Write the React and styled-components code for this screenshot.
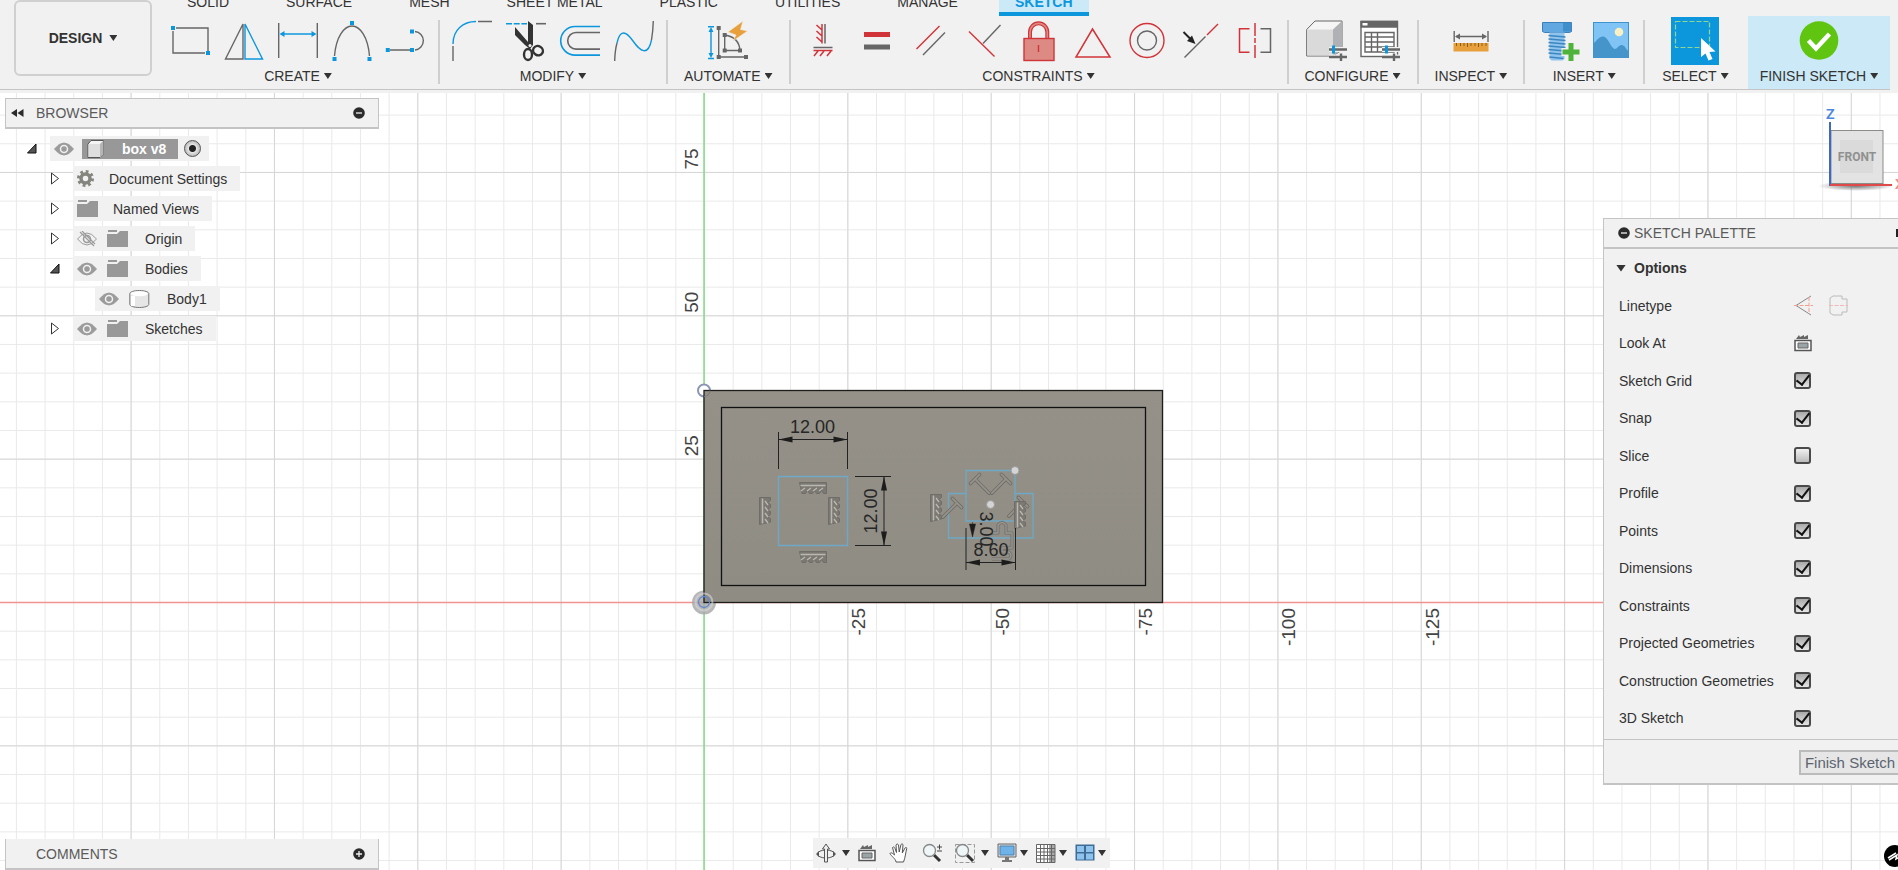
import React from 'react'
import { Fragment } from 'react';
import styled, { createGlobalStyle } from 'styled-components';

const GREY = '#666';
const BLUE = '#0c97dd';
const RED = '#d13438';

/* ---------- ribbon icons, all on a 40 x 48 board ---------- */

const Dot = ({ x, y, c = BLUE, s = 4 }) => (
    <rect x={x - s / 2} y={y - s / 2} width={s} height={s} fill={c} stroke="none" />
);

const Sliders = ({ x }) => (
    <g transform={`translate(${x} 0)`}>
        <path d="M0 32.5h18M0 40h18" stroke="#f1f1f1" strokeWidth="5" />
        <path d="M0 32.5h18M0 40h18M12 36.5v7.5" stroke={GREY} strokeWidth="2.4" />
        <path d="M4.5 28.5v8" stroke={BLUE} strokeWidth="3" />
    </g>
);

const icons = {
    rectangle: (
        <g fill="none" stroke={GREY} strokeWidth="1.4">
            <path d="M6 11h32v23M3 14v22h32" />
            <Dot x={3} y={11} /><Dot x={38} y={36} />
        </g>
    ),
    mirror: (
        <g fill="none" strokeWidth="1.4">
            <path d="M19 7v35H1.500z" stroke={GREY} />
            <path d="M21 7v35h17.500z" stroke={BLUE} />
        </g>
    ),
    dimension: (
        <g fill="none" strokeWidth="1.4">
            <path d="M.7 6v35M39.300 6v35" stroke={GREY} />
            <path d="M3 17h34" stroke={BLUE} />
            <path d="M1.500 17l5-3v6zM38.500 17l-5-3v6z" fill={BLUE} />
        </g>
    ),
    arc: (
        <g fill="none" stroke={GREY} strokeWidth="1.4">
            <path d="M2.500 39C4 20 12 9 20 9s16 11 17.500 30" />
            <Dot x={20} y={6} /><Dot x={2.5} y={42} /><Dot x={37.5} y={42} />
        </g>
    ),
    slot: (
        <g fill="none" stroke={GREY} strokeWidth="1.4">
            <path d="M4 33h20M29 14.500a9.300 9.300 0 0 1 0 18.500" />
            <Dot x={1.8} y={33} /><Dot x={26} y={33} /><Dot x={26} y={14.5} />
        </g>
    ),
    fillet: (
        <g fill="none" strokeWidth="1.4">
            <path d="M1 29v15M26 4.500h14" stroke={GREY} />
            <path d="M1 27C1 13 11 4.500 24 4.500" stroke={BLUE} />
        </g>
    ),
    trim: (
        <g fill="none" strokeWidth="1.6">
            <path d="M0 6.700h21" stroke={BLUE} strokeDasharray="6 1.700" />
            <path d="M30 6.700h10" stroke={GREY} />
            <path d="M22 4l5 4v20l-3 4-5-4L9 18v-8l13 15z" fill="#333" />
            <g stroke="#333" strokeWidth="2.400">
                <ellipse cx="22" cy="37.500" rx="4" ry="5.500" />
                <ellipse cx="32" cy="33.700" rx="5" ry="4.500" transform="rotate(30 32 33.700)" />
            </g>
            <circle cx="24" cy="28.500" r="1.500" fill="#f1f1f1" />
        </g>
    ),
    offset: (
        <g fill="none" strokeWidth="1.6">
            <path d="M40 9.500H15a14.300 14.300 0 0 0 0 28.600h25" stroke={BLUE} />
            <path d="M40 15.500H16a8.300 8.300 0 0 0 0 16.600h24" stroke={GREY} />
        </g>
    ),
    spline: (
        <g fill="none" strokeWidth="1.4">
            <path d="M.7 44Q1 33 3 26M37.500 23Q39 14 39.300 4" stroke={GREY} />
            <path d="M3 26C6 12 12 14 19 24s15 16 18.500-1" stroke={BLUE} />
        </g>
    ),
    automate: (
        <g fill="none" stroke={GREY} strokeWidth="1.4">
            <path d="M0 9.700h6M0 41.500h6M3 12v27" stroke={BLUE} />
            <path d="M3 10l2.500 5h-5zM3 41l2.500-5h-5z" fill={BLUE} stroke="none" />
            <path d="M10.700 11v29H38M16.700 18v15.500H32Q31 20 16.700 18" />
            <Dot x={10.7} y={11} c={GREY} /><Dot x={10.7} y={40} c={GREY} /><Dot x={38} y={40} c={GREY} />
            <Dot x={16.7} y={18} c={GREY} /><Dot x={16.7} y={33.5} c={GREY} /><Dot x={32} y={33.5} c={GREY} />
            <path d="M35 4L20 15l8 3-3 6 14.500-10-7-1.500z" fill="#e8a03d" stroke="#f1f1f1" strokeWidth="0.500" />
        </g>
    ),
    horizontal: (
        <g fill="none" strokeWidth="1.5">
            <path d="M22 7v19.500M10.500 30.500h19" stroke={GREY} />
            <path d="M19 7v19.500M13.500 8l5.500 5M13.500 14l5.500 5M13.500 20l5.500 5M10.500 33.500h19M15 34l-4 5M21 34l-4 5M28 34l-4 5" stroke={RED} />
        </g>
    ),
    equal: (
        <g>
            <rect x="7" y="15" width="26" height="5" fill={RED} />
            <rect x="7" y="27.500" width="26" height="5" fill={GREY} />
        </g>
    ),
    parallel: (
        <g fill="none" strokeWidth="1.4">
            <path d="M5.500 32l23-23" stroke={RED} />
            <path d="M12 38l22-22.500" stroke={GREY} />
        </g>
    ),
    perpendicular: (
        <g fill="none" strokeWidth="1.4">
            <path d="M18 26.500L35.500 8" stroke={GREY} />
            <path d="M4 14.500l25.500 25" stroke={RED} />
        </g>
    ),
    lock: (
        <g fill="none">
            <path d="M11 21v-6a8.600 8.600 0 0 1 17.300 0v6" stroke={RED} strokeWidth="4" />
            <path d="M11 21v-6a8.600 8.600 0 0 1 17.300 0v6" stroke="#dd8a85" strokeWidth="1.600" />
            <rect x="5" y="21.500" width="30" height="22" fill="#dd8a85" stroke={RED} strokeWidth="1.400" />
            <path d="M19.500 28v7" stroke={RED} strokeWidth="1.400" />
        </g>
    ),
    triangle: <path d="M19.500 12L37 40H3z" fill="none" stroke={RED} strokeWidth="1.500" />,
    concentric: (
        <g fill="none" strokeWidth="1.4">
            <circle cx="20" cy="23.500" r="17" stroke={RED} />
            <circle cx="20" cy="23.500" r="9.500" stroke={GREY} />
        </g>
    ),
    coincident: (
        <g fill="none" strokeWidth="1.4">
            <path d="M3.500 40.500l21-21" stroke={GREY} />
            <path d="M26 18L37 7" stroke={RED} />
            <path d="M2.500 15l7 7" stroke="#222" strokeWidth="2" />
            <path d="M14.500 27l-8.500-3 5-5.500z" fill="#222" />
        </g>
    ),
    symmetry: (
        <g fill="none" strokeWidth="1.5">
            <path d="M14.500 11.700h-10v23.500h10" stroke={RED} />
            <path d="M20 6v35" stroke={RED} strokeDasharray="13 2 5 2" />
            <path d="M25.500 11.700h10v23.500h-10" stroke={GREY} />
        </g>
    ),
    configure: (
        <g>
            <path d="M.7 12.500L9 4h27v29l-9 6H.7z" fill="#f5f5f5" stroke={GREY} />
            <path d="M27 12.500L36 4v29l-9 6z" fill="#b0b1b5" />
            <path d="M1.200 12.500H27V38.500H1.200z" fill="#dadada" />
            <Sliders x={23} />
        </g>
    ),
    table: (
        <g fill="none" stroke={GREY} strokeWidth="1.4">
            <rect x="1" y="4.500" width="36.500" height="35" fill="#fff" />
            <path d="M.5 3.700h37.500v7H.5z" fill={GREY} stroke="none" />
            <path d="M2.500 6h5v2.500h-5z" fill="#fff" stroke="none" />
            <path d="M5 15.500h29v19.500H5zM5 20h29M5 25h29M5 30h29M11.500 15.500V35M17.500 15.500V35" />
            <Sliders x={22} />
        </g>
    ),
    measure: (
        <g fill="none" stroke={GREY} strokeWidth="1.4">
            <path d="M3.200 14v11M37 14v11M5 19.500h30" />
            <path d="M4 19.500l5-3v6zM36 19.500l-5-3v6z" fill={GREY} stroke="none" />
            <path d="M2.500 26h35v8.500h-35z" fill="#e8a03d" stroke="none" />
            <path d="M5.500 26v3M9.500 26v3M13 26v3M16.500 26v4M20 26v3M24 26v3M27.500 26v4M31 26v3M35 26v3" stroke="#84601f" strokeWidth="1" />
        </g>
    ),
    bolt: (
        <g>
            <path d="M5.500 5.500h29v9l-2 1h-25l-2-1z" fill="#62a8e0" stroke="#3b80b8" />
            <path d="M26 6h8.500v8.500H26z" fill="#3e8fcb" />
            <path d="M12.500 15.500h15v26l-2 2h-11l-2-2z" fill="#8fc4ee" />
            <path d="M11.500 18.500l17 1.500M11.500 22l17 1.500M11.500 25.500l17 1.500M11.500 29l17 1.500M11.500 32.500l17 1.500M11.500 36l17 1.500M12.500 40l14 1.500" stroke="#3d86bf" strokeWidth="1.300" />
            <path d="M34 25v20M24.500 35h19" stroke="#f1f1f1" strokeWidth="8" />
            <path d="M34 26v18M25.500 35h17" stroke="#4fb23a" strokeWidth="5" />
        </g>
    ),
    picture: (
        <g>
            <rect x="2.500" y="5.500" width="35" height="35" fill="#7fc4f4" stroke="#3f93cf" />
            <circle cx="28" cy="15" r="4.300" fill="#fbf0c4" />
            <path d="M3 26c4-4 6-7 9.500-6.500 5 1 7 11 11 12.500 3 0 4-4 7-4 3.500 0 4 4 7 6v6.500H3z" fill="#4595cb" />
        </g>
    ),
    select: (
        <g>
            <rect x="0" y="0" width="48" height="48" fill={BLUE} />
            <path d="M4.500 4.500h34v26h-34z" fill="none" stroke="#8fd695" strokeWidth="1.200" strokeDasharray="5 2" />
            <path d="M30 21v19l4.500-3.500 3 7 4-1.500-3-7 6-.5z" fill="#fff" />
        </g>
    ),
    finish: (
        <g>
            <circle cx="20" cy="23.500" r="19.300" fill="#5fc510" />
            <path d="M9.500 23.500l7.500 8L30.500 17" fill="none" stroke="#fff" strokeWidth="4.500" />
        </g>
    ),
};

const groups = [
    { label: 'CREATE', tools: ['rectangle', 'mirror', 'dimension', 'arc', 'slot'] },
    { label: 'MODIFY', tools: ['fillet', 'trim', 'offset', 'spline'] },
    { label: 'AUTOMATE', wide: true, tools: ['automate'] },
    { label: 'CONSTRAINTS', tools: ['horizontal', 'equal', 'parallel', 'perpendicular', 'lock', 'triangle', 'concentric', 'coincident', 'symmetry'] },
    { label: 'CONFIGURE', wide: true, tools: ['configure', 'table'] },
    { label: 'INSPECT', wide: true, tools: ['measure'] },
    { label: 'INSERT', tools: ['bolt', 'picture'] },
    { label: 'SELECT', wide: true, last: true, tools: ['select'] },
    { label: 'FINISH SKETCH', active: true, tools: ['finish'] },
];

const tabs = ['SOLID', 'SURFACE', 'MESH', 'SHEET METAL', 'PLASTIC', 'UTILITIES', 'MANAGE', 'SKETCH'];

function Toolbar() {
    return (
        <TopBar>
            <DesignButton>DESIGN <Caret /></DesignButton>
            <Ribbon>
                <Tabs>
                    {tabs.map((t) => <Tab key={t} href="#" $active={t === 'SKETCH'}>{t}</Tab>)}
                </Tabs>
                <Groups>
                    {groups.map((g) => (
                        <Group key={g.label} $wide={g.wide} $last={g.last} $active={g.active}>
                            <Tools>
                                {g.tools.map((t) => (
                                    <Tool key={t} aria-label={t}>
                                        <svg width={t === 'select' ? 48 : 40} height="48" overflow="visible">{icons[t]}</svg>
                                    </Tool>
                                ))}
                            </Tools>
                            <GroupLabel>{g.label}<Caret /></GroupLabel>
                        </Group>
                    ))}
                </Groups>
            </Ribbon>
        </TopBar>
    );
}

/* ---------- browser tree ---------- */

const Eye = ({ off }) => (
    <svg width="20" height="16">
        <path d="M.5 8Q10-4 19.500 8 10 20 .5 8z" fill={off ? 'none' : '#9b9b9b'} stroke="#9b9b9b" />
        <circle cx="10" cy="8" r="3.500" fill={off ? 'none' : '#9b9b9b'} stroke={off ? '#9b9b9b' : '#f1f1f1'} strokeWidth="1.500" />
        {off && <path d="M3 1l14 14M5 0l13 13" stroke="#9b9b9b" strokeWidth="1.200" />}
    </svg>
);

const Folder = () => (
    <svg width="21" height="17">
        <path d="M0 4h10l3-3h8v16H0z" fill="#989898" />
        <path d="M1 1h9" stroke="#989898" strokeWidth="2" />
        <path d="M0 3h10l2-2" stroke="#f1f1f1" fill="none" />
    </svg>
);

const Gear = () => (
    <svg width="17" height="17">
        <circle cx="8.500" cy="8.500" r="4.500" fill="none" stroke="#85857f" strokeWidth="3.500" />
        <circle cx="8.500" cy="8.500" r="7" fill="none" stroke="#85857f" strokeWidth="3" strokeDasharray="2.750 2.750" />
    </svg>
);

const Cube = () => (
    <svg width="18" height="18">
        <path d="M1 4l3-3.500h12.500V14L13 17.500H1z" fill="#f4f4f4" stroke="#555" />
        <path d="M13 4l3.500-3.500V14L13 17.500z" fill="#b5b5b5" />
        <path d="M1.500 4H13v13H1.500z" fill="#dedede" />
    </svg>
);

const Body = () => (
    <svg width="21" height="18">
        <path d="M.8 3.500v11c0 1.500 4 3 9.500 3s9.500-1.500 9.500-3v-11c0-1.500-4-3-9.500-3s-9.500 1.500-9.500 3z" fill="#e6e6e6" stroke="#777" />
        <ellipse cx="10.300" cy="3.700" rx="8.500" ry="2.500" fill="#fff" />
        <path d="M2 6h4v10H2z" fill="#fff" />
    </svg>
);

const Arrow = ({ open }) => (
    <svg width="10" height="13">
        {open ? <path d="M9 2v9H.5z" fill="#555" stroke="#111" /> : <path d="M1.500 1v11l7-5.500z" fill="#fff" stroke="#333" />}
    </svg>
);

const tree = [
    { name: 'Document Settings', Icon: Gear },
    { name: 'Named Views', Icon: Folder },
    { name: 'Origin', Icon: Folder, eye: 'off' },
    { name: 'Bodies', Icon: Folder, eye: 'on', open: true },
    { name: 'Body1', Icon: Body, eye: 'on', leaf: true },
    { name: 'Sketches', Icon: Folder, eye: 'on' },
];

const RoundIcon = ({ plus }) => (
    <svg width="12" height="12">
        <circle cx="6" cy="6" r="5.800" fill="#2b2b2b" />
        <path d={plus ? 'M3 6h6M6 3v6' : 'M3 6h6'} stroke="#f1f1f1" strokeWidth="1.300" />
    </svg>
);

function Browser() {
    return (
        <BrowserPanel>
            <PanelBar>
                <svg width="13" height="8"><path d="M6 0v8L0 4zM12.500 0v8l-6-4z" fill="#2b2b2b" /></svg>
                <PanelTitle>BROWSER</PanelTitle>
                <IconButton aria-label="Collapse"><RoundIcon /></IconButton>
            </PanelBar>
            <Tree>
                <TreeRow $indent={22}>
                    <Arrow open />
                    <TreeItem>
                        <Eye />
                        <Selected><Cube /><span>box v8</span></Selected>
                        <ActiveRadio aria-label="Activate box v8" defaultChecked />
                    </TreeItem>
                </TreeRow>
                {tree.map(({ name, Icon, eye, open, leaf }) => (
                    <TreeRow key={name} $indent={leaf ? 67 : 45}>
                        {leaf ? <Blank /> : <Arrow open={open} />}
                        <TreeItem>
                            {eye && <Eye off={eye === 'off'} />}
                            <Icon />
                            <TreeName $near={!eye}>{name}</TreeName>
                        </TreeItem>
                    </TreeRow>
                ))}
            </Tree>
        </BrowserPanel>
    );
}

/* ---------- sketch canvas ---------- */

// origin of the sketch and pixels per grid step
const OX = 704;
const OY = 509;
const STEP = 28.67;
const MAJOR = STEP * 5;

const Hatch = ({ x, y, turn }) => (
    <g transform={`translate(${x} ${y})${turn ? ' rotate(-90)' : ''}`} fill="none" stroke="#6f6d68">
        <path d="M-13.500-5.500h27v11h-3l-2-3-2 3h-3l-2-3-2 3h-3l-2-3-2 3h-3.500z" fill="#7c7973" />
        <path d="M-12.500-2.500h25" stroke="#bab8b2" strokeWidth="1.500" />
        <path d="M-12 3l4-3M-6 3l4-3M0 3l4-3M6 3l4-3" stroke="#bab8b2" strokeWidth="1.300" />
    </g>
);

const Perp = ({ x, y, turn }) => (
    <g transform={`translate(${x} ${y}) rotate(${turn})`} fill="none" strokeLinecap="round">
        <path d="M-6.500 0H6.500M0 1v19" stroke="#6f6d68" strokeWidth="3.500" />
        <path d="M-6.500 0H6.500M0 1v19" stroke="#96938c" strokeWidth="1.800" />
    </g>
);

// a dimension line with a head at both ends
const Dim = ({ x, y, len, turn }) => (
    <g transform={`translate(${x} ${y}) rotate(${turn || 0})`}>
        <path d={`M0 0h${len}`} stroke="#222" />
        <path d={`M0 0l14-3v6zM${len} 0l-14-3v6z`} fill="#1c1c1c" />
    </g>
);

function Canvas() {
    return (
        <CanvasSvg>
            <defs>
                <pattern id="minor" x={OX} y={OY} width={STEP} height={STEP} patternUnits="userSpaceOnUse">
                    <path d={`M0 .5H${STEP}M.5 0V${STEP}`} stroke="#e9e9e9" />
                </pattern>
                <pattern id="major" x={OX} y={OY} width={MAJOR} height={MAJOR} patternUnits="userSpaceOnUse">
                    <path d={`M0 .5H${MAJOR}M.5 0V${MAJOR}`} stroke="#d6d6d6" />
                </pattern>
                <linearGradient id="face" x1="0" y1="0" x2="0" y2="1">
                    <stop offset="0" stopColor="#959189" />
                    <stop offset="1" stopColor="#8f8c84" />
                </linearGradient>
            </defs>
            <rect width="100%" height="100%" fill="url(#minor)" />
            <rect width="100%" height="100%" fill="url(#major)" />
            <path d={`M0 ${OY + 0.5}h4000`} stroke="#ee9490" strokeWidth="1.500" />
            <path d={`M${OX} 0v4000`} stroke="#84dd84" strokeWidth="1.500" />

            {['25', '50', '75'].map((n, i) => (
                <AxisText key={n} textAnchor="middle" transform={`translate(${OX - 6} ${OY - MAJOR * (i + 1) - 13}) rotate(-90)`}>{n}</AxisText>
            ))}
            {['-25', '-50', '-75', '-100', '-125'].map((n, i) => (
                <AxisText key={n} textAnchor="end" transform={`translate(${OX + MAJOR * (i + 1) + 18} ${OY + 6}) rotate(-90)`}>{n}</AxisText>
            ))}

            <circle cx={OX} cy="297.500" r="6" fill="#fff" stroke="#8b97b4" strokeWidth="2" />
            <circle cx={OX} cy={OY + 0.5} r="12" fill="#a5a5a8" opacity="0.800" />
            <rect x={OX} y="297.500" width="458.500" height="212" fill="url(#face)" stroke="#1d1d1d" strokeWidth="1.300" />
            <rect x="721.500" y="314.500" width="424" height="178" fill="none" stroke="#111" strokeWidth="1.300" />
            <path d={`M${OX} 303.500a6 6 0 0 0 6-6`} fill="none" stroke="#777" />
            <circle cx={OX} cy={OY} r="8.500" fill="none" stroke="#d8d8d8" strokeWidth="2" opacity="0.600" />
            <circle cx={OX} cy={OY} r="5.500" fill="none" stroke="#6487cc" strokeWidth="1.300" />

            <g fill="none" stroke="#6fa8c4" strokeWidth="1.400">
                <path d="M778.500 383.500h69v69h-69z" />
                <path d="M966 377.500h49v50.500h-49zM966 400.500h-17.500v44.500H1033v-44.500h-17.500" />
            </g>

            <Hatch x={813} y={395} />
            <Hatch x={813} y={464} />
            <Hatch x={765} y={418} turn />
            <Hatch x={834} y={418} turn />
            <Hatch x={936} y={415} turn />
            <Perp x={975} y={386} turn={-45} />
            <Perp x={1006} y={386} turn={45} />
            <Perp x={957} y={410} turn={45} />
            <Perp x={1023} y={409} turn={45} />
            <Hatch x={1020} y={422} turn />
            <g fill="none" strokeLinejoin="round">
                <path d="M992 466h17q4-3 0-7h-7v-4h10v-15h-6v-8q-4-5-8 0v8h-6" stroke="#6f6d68" strokeWidth="3" />
                <path d="M992 466h17q4-3 0-7h-7v-4h10v-15h-6v-8q-4-5-8 0v8h-6" stroke="#9b9891" strokeWidth="1.300" />
            </g>

            <path d="M778.500 339v37M847.500 339v37M855 383.500h36M855 452.500h36M966 435v42M1015.500 435v42" stroke="#222" />
            <Dim x={778.5} y={346.5} len={69} />
            <Dim x={884} y={383.5} len={69} turn={90} />
            <Dim x={966} y={469.5} len={49.5} />
            <path d="M972.500 429v8M972.500 444l-3-13h6z" fill="#1c1c1c" stroke="#1c1c1c" strokeWidth="0.500" />

            <DimText x="812.500" y="339.500">12.00</DimText>
            <DimText transform="translate(877 418) rotate(-90)">12.00</DimText>
            <DimText transform="translate(980 436) rotate(90)">3.00</DimText>
            <DimText x="991" y="462.500">8.60</DimText>

            <circle cx="1015" cy="377.500" r="4" fill="#d4d4d4" stroke="#999" />
            <circle cx="990.500" cy="411.500" r="4" fill="#d4d4d4" stroke="#999" />
        </CanvasSvg>
    );
}

const ViewCube = () => (
    <Cubed width="80" height="84">
        <defs>
            <radialGradient id="shade"><stop offset="0" stopColor="#777" /><stop offset="1" stopColor="#777" stopOpacity="0" /></radialGradient>
        </defs>
        <ellipse cx="38" cy="83" rx="38" ry="5" fill="url(#shade)" />
        <rect x="13" y="27.500" width="52" height="53" fill="#e3e3e4" stroke="#8b8b88" />
        <rect x="22" y="37" width="33" height="33" fill="#dadadb" />
        <path d="M12 19v64" stroke="#3c68c8" strokeWidth="2" />
        <path d="M12 82h62" stroke="#e04a4a" strokeWidth="2" />
        <text x="39" y="58" textAnchor="middle" fontFamily="Roboto, sans-serif" fontSize="12" fontWeight="700" fill="#8f9190">FRONT</text>
        <text x="8" y="16" fontFamily="Noto Sans, sans-serif" fontSize="15" fontWeight="600" fill="#4d87dd">Z</text>
        <text x="77" y="86" fontFamily="Noto Sans, sans-serif" fontSize="15" fontWeight="600" fill="#ee8a8a">X</text>
    </Cubed>
);

/* ---------- sketch palette ---------- */

const options = ['Sketch Grid', 'Snap', 'Slice', 'Profile', 'Points', 'Dimensions', 'Constraints', 'Projected Geometries', 'Construction Geometries', '3D Sketch'];

const LookIcon = () => (
    <svg width="18" height="18">
        <path d="M1 6.500h16v10H1z" fill="#fff" stroke="#555" strokeWidth="1.500" />
        <path d="M4 9h10v5H4z" fill="#9aa3a6" stroke="#666" />
        <path d="M2 5l3-4 1 2 4-2v2l4-2v4z" fill="#666" />
    </svg>
);

function Palette() {
    return (
        <PalettePanel>
            <PaletteHead>
                <IconButton aria-label="Collapse palette"><RoundIcon /></IconButton>
                SKETCH PALETTE
                <Pin />
            </PaletteHead>
            <OptionsHead><Caret $big />Options</OptionsHead>
            <OptionList>
                <Option as="div">
                    Linetype
                    <IconPair>
                        <IconButton aria-label="Construction">
                            <svg width="19" height="21" fill="none">
                                <path d="M17 1L2 10.500 17 20" stroke="#888" />
                                <path d="M0 10.500h19M15 2v17" stroke="#f0a090" strokeDasharray="4 1.500" />
                            </svg>
                        </IconButton>
                        <IconButton aria-label="Centerline">
                            <svg width="19" height="21" fill="none">
                                <path d="M1 8V3l3-2h9v3h5v4M1 13v5l3 2h9v-3h5v-4M1 8v5M18 8v5" stroke="#bbb" />
                                <path d="M0 10.500h19" stroke="#f0b8b8" strokeDasharray="4 1.500" />
                            </svg>
                        </IconButton>
                    </IconPair>
                </Option>
                <Option as="div">Look At<IconButton aria-label="Look At"><LookIcon /></IconButton></Option>
                {options.map((o) => (
                    <Option key={o}>{o}<Check defaultChecked={o !== 'Slice'} /></Option>
                ))}
            </OptionList>
            <PaletteFoot><FinishButton>Finish Sketch</FinishButton></PaletteFoot>
        </PalettePanel>
    );
}

/* ---------- navigation bar ---------- */

const Lens = ({ extra }) => (
    <svg width="20" height="20">
        {extra === 'window' && <path d="M.5 1.500h19v18H.5z" fill="none" stroke="#999" strokeDasharray="4 2" />}
        <path d="M12 12l6 6" stroke="#333" strokeWidth="3" />
        <circle cx="7.500" cy="7.500" r="6" fill="#eef6f8" stroke="#888" strokeWidth="1.300" />
        {extra === 'zoom' && <path d="M15 4h5M17.500 1.500v5M15 8h5" stroke="#444" />}
    </svg>
);

const navItems = [
    {
        name: 'Orbit', menu: true, gap: true, icon: (
            <svg width="20" height="20" fill="none" stroke="#555">
                <ellipse cx="10" cy="11" rx="8.500" ry="4" />
                <path d="M8.500 19V6H6.500L10 1l3.500 5h-2v13z" fill="#eee" />
                <path d="M0 11l3-3v6zM20 11l-3-3v6z" fill="#555" stroke="none" />
            </svg>
        ),
    },
    { name: 'Look at', icon: <LookIcon /> },
    {
        name: 'Pan', icon: (
            <svg width="20" height="20">
                <path d="M7 19c0-3-5-6-6-8.500 1-1.500 3 0 4.500 1.500L3.500 4.500c1-1.500 2 0 2.500 1l1.500 4L7 2c1-1.500 2-1 2.500 0l.7 7L12 1.500c1-1 2-.5 2 .5l-.7 8L16 5c1-1 2-.5 1.700.7C16.500 10 16.500 14 14.500 19z" fill="#fff" stroke="#555" />
            </svg>
        ),
    },
    { name: 'Zoom', icon: <Lens extra="zoom" /> },
    { name: 'Zoom window', menu: true, gap: true, icon: <Lens extra="window" /> },
    {
        name: 'Display', menu: true, icon: (
            <svg width="20" height="20">
                <path d="M1 1h18v13H1z" fill="#ddd" stroke="#666" />
                <path d="M3 3h14v9H3z" fill="#6fb3e8" stroke="#4b83b4" />
                <path d="M8 14h4v3h3v2H5v-2h3z" fill="#777" />
            </svg>
        ),
    },
    {
        name: 'Grid', menu: true, icon: (
            <svg width="20" height="20">
                <path d="M.5 1.500h18.500v18H.5z" fill="#fff" />
                <path d="M13 1.500h6v18h-6z" fill="#aaa" />
                <path d="M.5 1.500h18.500v18H.5zM.5 5.500H19M.5 9H19M.5 12.500H19M.5 16H19M4.500 1.500v18M8 1.500v18M11.500 1.500v18M15.500 1.500v18" fill="none" stroke="#666" />
            </svg>
        ),
    },
    {
        name: 'Viewports', menu: true, icon: (
            <svg width="20" height="18">
                <path d="M.5.5h19v16H.5z" fill="#3f6c94" />
                <path d="M2 2h7v6H2zM11 2h7v6h-7zM2 9.500h7v6H2zM11 9.500h7v6h-7z" fill="#8ec3ee" />
            </svg>
        ),
    },
];

function App() {
    return (
        <Fragment>
            <GlobalStyle />
            <Page>
                <Toolbar />
                <Workspace>
                    <Canvas />
                    <Overlay>
                        <Sides>
                            <Browser />
                            <RightSide>
                                <ViewCube />
                                <Palette />
                            </RightSide>
                        </Sides>
                        <Bottom>
                            <PanelBar $comments>
                                <PanelTitle>COMMENTS</PanelTitle>
                                <IconButton aria-label="Expand comments"><RoundIcon plus /></IconButton>
                            </PanelBar>
                            <NavBar>
                                {navItems.map((n) => (
                                    <NavButton key={n.name} aria-label={n.name} $gap={n.gap} $menu={n.menu}>
                                        {n.icon}{n.menu && <Caret $nav />}
                                    </NavButton>
                                ))}
                            </NavBar>
                            <Badge aria-label="Assistant">
                                <svg width="22" height="22" fill="none" stroke="#fff" strokeWidth="1.500">
                                    <path d="M4 13l8-5M5 15l8-5-1 4 5-3" />
                                </svg>
                            </Badge>
                        </Bottom>
                    </Overlay>
                </Workspace>
            </Page>
        </Fragment>
    );
}

export default App;

const GlobalStyle = createGlobalStyle`
    * {
        box-sizing: border-box;
    }
    body {
        margin: 0;
        overflow: hidden;
        background: #fff;
        color: #333;
        font-family: "Liberation Sans", Arial, sans-serif;
        font-size: 14px;
    }
    button {
        padding: 0;
        border: 0;
        background: none;
        font: inherit;
        color: inherit;
    }
    svg {
        flex-shrink: 0;
    }
`;

const Page = styled.div`
    display: flex;
    flex-direction: column;
    height: 100vh;
`;

const TopBar = styled.header`
    display: flex;
    padding: 0 8px 3px 14px;
    background: #f1f1f1;
`;

const Caret = styled.i`
    width: ${({ $big }) => ($big ? '10px' : '8px')};
    height: ${({ $big }) => ($big ? '7px' : '6px')};
    background: #333;
    clip-path: polygon(0 0, 100% 0, 50% 100%);
    margin-left: ${({ $big, $nav }) => ($big ? 0 : $nav ? '3px' : '4px')};
`;

const DesignButton = styled.button`
    display: flex;
    flex-shrink: 0;
    align-items: center;
    justify-content: center;
    gap: 3px;
    width: 138px;
    height: 76px;
    border: 2px solid #d0d0d0;
    border-radius: 6px;
    font-weight: bold;
`;

const Ribbon = styled.div`
    flex: 1;
    margin-left: 6px;
`;

const Tabs = styled.nav`
    display: flex;
    align-items: flex-end;
    gap: 25px;
    height: 16px;
    padding-left: 13px;
`;

const Tab = styled.a`
    padding: 0 16px 2px;
    border-bottom: 4px solid ${({ $active }) => ($active ? '#0c97dd' : 'transparent')};
    background: ${({ $active }) => ($active ? '#cbe9f6' : 'none')};
    color: ${({ $active }) => ($active ? '#0c97dd' : '#333')};
    font-weight: ${({ $active }) => ($active ? 'bold' : 'normal')};
    line-height: 16px;
    text-decoration: none;
    white-space: nowrap;
`;

const Groups = styled.div`
    display: flex;
    height: 74px;
    margin-left: -158px;
    padding-left: 158px;
    border-bottom: 1px solid #c4c4c4;
`;

const Group = styled.div`
    display: flex;
    flex-direction: column;
    align-items: center;
    padding: 1px ${({ $wide, $last }) => ($last ? '17px' : $wide ? '16px' : '12px')} 0;
    background: ${({ $active }) => ($active ? '#cbe9f6' : `
        linear-gradient(#cfcfcf, #cfcfcf) right 4px / 2px 64px no-repeat`)};
    ${({ $last }) => $last && 'background: none;'}
    ${({ $active }) => !$active && 'border-right: 2px solid transparent; background-origin: border-box;'}
`;

const Tools = styled.div`
    display: flex;
    gap: 14px;
`;

const Tool = styled.button`
    display: flex;
`;

const GroupLabel = styled.button`
    display: flex;
    align-items: center;
    line-height: 22px;
    white-space: nowrap;
`;

const Workspace = styled.main`
    display: grid;
    flex: 1;
    min-height: 0;
    overflow: hidden;
`;

const CanvasSvg = styled.svg`
    grid-area: 1 / 1;
    width: 100%;
    height: 100%;
`;

const AxisText = styled.text`
    font-size: 19px;
    fill: #444;
`;

const DimText = styled.text`
    font-size: 18px;
    fill: #262626;
    text-anchor: middle;
`;

const Overlay = styled.div`
    grid-area: 1 / 1;
    display: flex;
    flex-direction: column;
    justify-content: space-between;
    min-width: 0;
    z-index: 1;
`;

const Sides = styled.div`
    display: flex;
    justify-content: space-between;
    padding: 5px 0 0 5px;
`;

const BrowserPanel = styled.aside`
    width: 374px;
`;

const PanelBar = styled.div`
    display: flex;
    align-items: center;
    width: 374px;
    height: 31px;
    padding: 0 13px 0 ${({ $comments }) => ($comments ? '30px' : '5px')};
    gap: 12px;
    background: #f1f1f1;
    border: 1px solid #c4c4c4;
    border-bottom-width: 2px;
    color: #5a5a5a;
    ${({ $comments }) => $comments && 'border-top: 0;'}
`;

const PanelTitle = styled.span`
    flex: 1;
`;

const IconButton = styled.button`
    display: flex;
`;

const Tree = styled.div`
    display: flex;
    flex-direction: column;
    gap: 5px;
    padding-top: 7px;
`;

const TreeRow = styled.div`
    display: flex;
    align-items: center;
    gap: 13px;
    padding-left: ${({ $indent }) => $indent}px;
`;

const Blank = styled.span`
    width: 10px;
`;

const TreeItem = styled.div`
    display: flex;
    align-items: center;
    gap: 10px;
    height: 25px;
    padding: 0 3px 0 4px;
    background: #f1f1f1;
`;

const TreeName = styled.span`
    padding: 0 10px 0 ${({ $near }) => ($near ? '5px' : '7px')};
`;

const Selected = styled.span`
    display: flex;
    align-items: center;
    gap: 17px;
    height: 20px;
    padding: 0 12px 0 5px;
    margin: 0 -4px 0 -2px;
    background: #989898;
    color: #fff;
    font-weight: bold;
`;

const ActiveRadio = styled.input.attrs({ type: 'radio' })`
    appearance: none;
    width: 17px;
    height: 17px;
    margin: 0 5px 0 0;
    border: 1px solid #555;
    border-radius: 50%;
    background: radial-gradient(#222 0 3px, #e4e4e4 4px, #999);
`;

const RightSide = styled.aside`
    display: flex;
    flex-direction: column;
    align-items: flex-end;
    width: 295px;
    padding-top: 5px;
`;

const Cubed = styled.svg`
    overflow: visible;
`;

const PalettePanel = styled.section`
    width: 100%;
    margin-top: 31px;
    background: #f1f1f1;
    border: solid #c4c4c4;
    border-width: 1px 0 2px 1px;
`;

const PaletteHead = styled.div`
    display: flex;
    align-items: center;
    gap: 4px;
    height: 30px;
    padding-left: 14px;
    border-bottom: 2px solid #c4c4c4;
    color: #5a5a5a;
`;

const Pin = styled.i`
    width: 2px;
    height: 8px;
    margin-left: auto;
    background: #222;
`;

const OptionsHead = styled.div`
    display: flex;
    align-items: center;
    gap: 8px;
    height: 38px;
    padding-left: 12px;
    font-weight: bold;
`;

const OptionList = styled.div`
    display: grid;
    grid-auto-rows: 1fr;
    height: 452px;
    padding-bottom: 2px;
`;

const Option = styled.label`
    display: grid;
    grid-template-columns: 175px auto;
    justify-content: start;
    align-items: center;
    padding-left: 15px;
`;

const IconPair = styled.span`
    display: flex;
    gap: 16px;
`;

const Check = styled.input.attrs({ type: 'checkbox' })`
    appearance: none;
    display: flex;
    align-items: center;
    justify-content: center;
    width: 17px;
    height: 17px;
    margin: 0;
    padding-bottom: 4px;
    border: 2px solid #4a4a4a;
    border-radius: 3px;
    background: linear-gradient(#f1f1f1, #bbb);
    &:checked {
        background: linear-gradient(#aaa, #e4e4e4);
    }
    &:checked::before {
        content: '';
        flex-shrink: 0;
        width: 6px;
        height: 11px;
        border: solid #111;
        border-width: 0 2px 2px 0;
        transform: rotate(38deg);
    }
`;

const PaletteFoot = styled.div`
    display: flex;
    justify-content: flex-end;
    padding: 10px 0 8px;
    border-top: 1px solid #c4c4c4;
`;

const FinishButton = styled.button`
    height: 25px;
    padding: 0 3px 0 4px;
    border: 2px solid #bbb;
    border-right: 0;
    background: #e6e6e6;
    color: #5b6470;
    font-size: 15px;
`;

const Bottom = styled.footer`
    display: grid;
    grid-template-columns: 1fr auto 1fr;
    align-items: end;
    padding-left: 5px;
`;

const NavBar = styled.div`
    display: flex;
    align-items: center;
    gap: 8px;
    height: 30px;
    margin: 0 0 2px 20px;
    padding: 0 4px 0 3px;
    background: #f1f1f1;
`;

const NavButton = styled.button`
    display: flex;
    align-items: center;
    gap: ${({ $gap }) => ($gap ? '3px' : 0)};
    padding-right: ${({ $menu }) => ($menu ? 0 : '5px')};
`;

const Badge = styled.button`
    display: flex;
    justify-self: end;
    margin: 0 -8px 3px 0;
    border-radius: 50%;
    background: #000;
`;
